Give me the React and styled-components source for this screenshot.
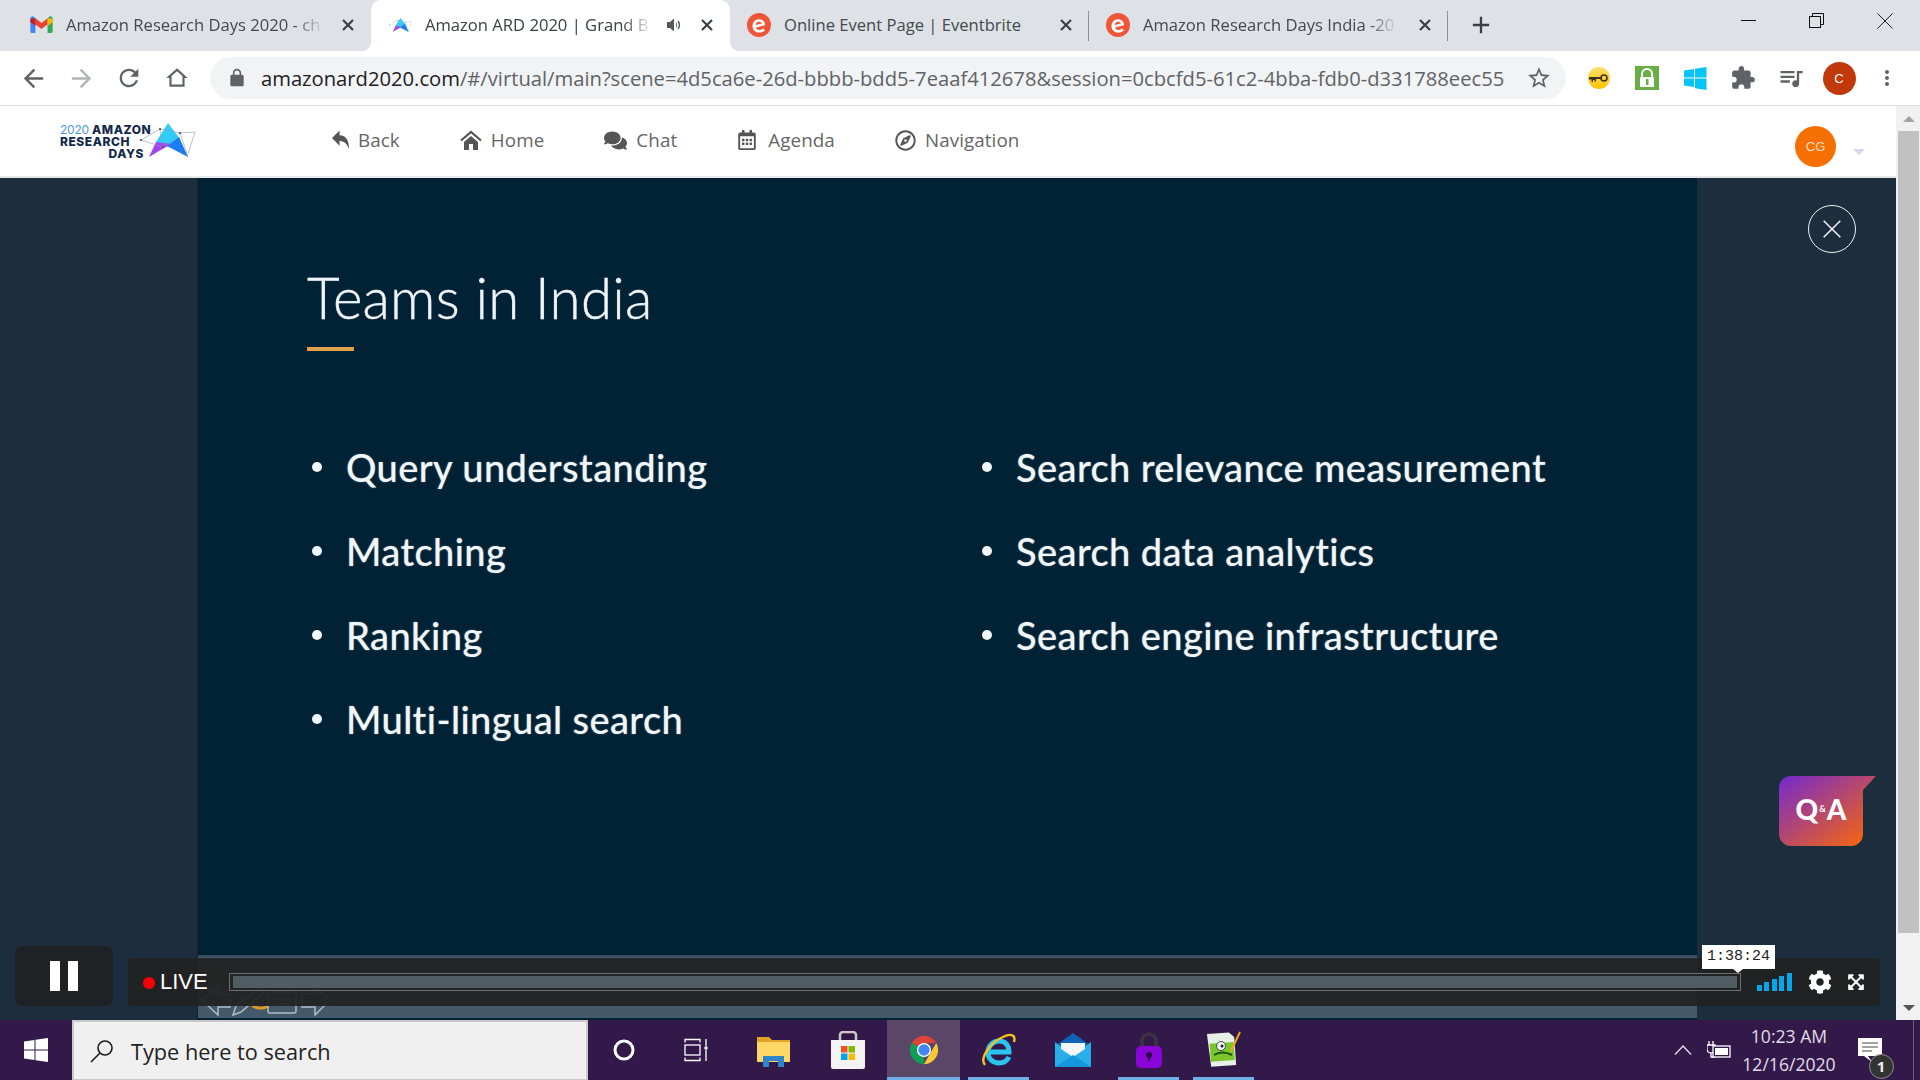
import React from "react";
import styled, { createGlobalStyle } from "styled-components";
import { FaCog, FaComments, FaExpandArrowsAlt, FaRegCompass, FaRegCalendarAlt } from "react-icons/fa";

const Global = createGlobalStyle`
  html, body { margin: 0; padding: 0; width: 1920px; height: 1080px; overflow: hidden; background: #1c2e3d; }
  * { box-sizing: border-box; }
  #root { width: 1920px; height: 1080px; }
`;

const Screen = styled.div`
  width: 1920px; height: 1080px; display: flex; flex-direction: column;
  font-family: "Open Sans", "Liberation Sans", sans-serif;
`;

/* ---------- tabs ---------- */
const TabStrip = styled.div`
  height: 51px; background: #dee1e6; display: flex; align-items: stretch; padding-left: 12px; flex: none;
`;
const Tab = styled.div`
  position: relative; width: 359px; display: flex; align-items: center; padding: 0 11px 2px 19px;
  background: ${p => (p.$active ? "#fff" : "transparent")};
  border-radius: ${p => (p.$active ? "10px 10px 0 0" : "0")};
  ${p => p.$active && `
    &::before, &::after { content: ""; position: absolute; bottom: 0; width: 10px; height: 10px; }
    &::before { left: -10px; background: radial-gradient(circle at 0 0, transparent 10px, #fff 10.5px); }
    &::after { right: -10px; background: radial-gradient(circle at 100% 0, transparent 10px, #fff 10.5px); }
  `}
`;
const TabSep = styled.span`
  position: absolute; right: 0; top: 11px; width: 1px; height: 30px; background: #8d9094;
`;
const TabIcon = styled.span`
  width: 20px; height: 20px; margin-right: 15px; flex: none; display: flex; align-items: center; justify-content: center;
  svg { flex: none; }
`;
const TabTitle = styled.span`
  flex: 0 1 auto; min-width: 0; white-space: nowrap; font-size: 16.6px; color: ${p => (p.$active ? "#3c4043" : "#45484c")};
  ${p => p.$fade && `
    -webkit-mask-image: linear-gradient(to right, #000 calc(100% - 26px), rgba(0,0,0,.12) 100%);
    mask-image: linear-gradient(to right, #000 calc(100% - 26px), rgba(0,0,0,.12) 100%);
  `}
`;
const TabGlyph = styled.span`
  width: 24px; height: 24px; flex: none; display: flex; align-items: center; justify-content: center; color: #3c4043;
  margin-left: ${p => (p.$push ? "auto" : "9px")};
`;
const NewTab = styled.div`
  width: 28px; margin-left: 19px; padding-bottom: 2px; display: flex; align-items: center; justify-content: center; color: #3c4043;
`;
const WindowButtons = styled.div`
  margin-left: auto; display: flex; padding-right: 1px;
`;
const WindowButton = styled.div`
  width: 68px; display: flex; justify-content: center; padding-top: 13px;
`;

/* ---------- toolbar ---------- */
const Toolbar = styled.div`
  height: 55px; background: #fff; border-bottom: 1px solid #dadce0; display: flex; align-items: center; padding: 0 9px; flex: none;
`;
const ToolButton = styled.div`
  width: 48px; height: 42px; display: flex; align-items: center; justify-content: center; flex: none;
  color: ${p => (p.$off ? "#b3b5b8" : "#5f6368")};
`;
const Omnibox = styled.div`
  width: 1356px; height: 42px; border-radius: 21px; background: #f1f3f4; margin: 0 9px; display: flex; align-items: center; padding-left: 16px; flex: none;
`;
const LockBox = styled.span`
  width: 22px; display: flex; justify-content: center; color: #5f6368; flex: none; margin-right: 13px;
`;
const Url = styled.span`
  font-size: 20.2px; color: #5f6368; white-space: nowrap; width: 1243px; flex: none;
  b { font-weight: 400; color: #202124; }
`;
const StarBox = styled.span`
  margin-left: auto; width: 54px; display: flex; justify-content: center; color: #5f6368;
`;
const Profile = styled.div`
  width: 33px; height: 33px; border-radius: 50%; background: #c1390b; color: #fff; display: flex; align-items: center; justify-content: center;
  font: 13px "Liberation Sans", sans-serif;
`;

/* ---------- page ---------- */
const Page = styled.div`
  flex: 1; min-height: 0; display: flex;
`;
const Main = styled.div`
  flex: 1; min-width: 0; display: flex; flex-direction: column;
`;
const Scrollbar = styled.div`
  width: 24px; background: #f1f1f1; display: flex; flex-direction: column; align-items: center; padding: 0 1px 0 2px;
`;
const ScrollArrow = styled.div`
  height: 25px; display: flex; align-items: center; justify-content: center; flex: none;
  &::before { content: ""; border-left: 6px solid transparent; border-right: 6px solid transparent;
    ${p => (p.$down ? "border-top: 6px solid #555;" : "border-bottom: 6px solid #a3a3a3;")} }
`;
const ScrollThumb = styled.div`
  width: 100%; height: 802px; background: #c1c1c1; flex: none;
`;
const ScrollFill = styled.div` flex: 1; `;

const Nav = styled.nav`
  height: 72px; background: #fff; border-bottom: 2px solid #e9e9e9; display: flex; align-items: center; padding: 0 31px 2px 60px; flex: none;
`;
const Logo = styled.div`
  width: 136px; height: 40px; display: flex; align-items: center; flex: none; margin-right: 136px;
`;
const LogoText = styled.div`
  width: 80px; font: 800 12px/12px Inter, "Liberation Sans", sans-serif; color: #13294b; letter-spacing: 0.55px; flex: none; white-space: nowrap; margin-top: 3px;
  span { font-weight: 400; color: #4f9ad6; letter-spacing: -0.2px; margin-right: 3px; }
`;
const LogoLine = styled.div`
  width: 86px; text-align: ${p => (p.$right ? "right" : "left")}; padding-right: ${p => (p.$right ? 2 : 0)}px;
`;
const NavLinks = styled.div`
  display: flex; gap: 60px; align-items: center;
`;
const NavLink = styled.div`
  display: flex; align-items: center; gap: ${p => p.$gap || 9}px; color: #666; font-size: 18.8px; font-family: "Open Sans", sans-serif; letter-spacing: 0.1px;
  svg { color: #555; flex: none; }
`;
const UserBox = styled.div`
  margin-left: auto; margin-top: 13px; display: flex; align-items: center; gap: 17px;
`;
const UserAvatar = styled.div`
  width: 41px; height: 41px; border-radius: 50%; background: #f56f02; color: #ffe0c4; font: 13px "Liberation Sans", sans-serif; display: flex; align-items: center; justify-content: center;
`;
const Caret = styled.div`
  margin-top: 10px; border-left: 6px solid transparent; border-right: 6px solid transparent; border-top: 6px solid #d3d8e6;
`;

/* ---------- stage ---------- */
const Stage = styled.div`
  position: relative; flex: 1; min-height: 0; background: #1c2e3d; padding-left: 198px; display: flex;
`;
const Slide = styled.div`
  width: 1499px; display: flex; flex-direction: column; background: #012235; padding-bottom: 2px; box-shadow: -1px 0 0 #152331;
`;
const SlideBody = styled.div`
  flex: 1; padding: 89px 0 0 109px; color: #f1f6f8; font-family: "Open Sans", sans-serif;
`;
const Title = styled.h1`
  margin: 0; font: 300 56.4px/60px Lato, "Open Sans", sans-serif; color: #eef4f7; letter-spacing: 0.25px; -webkit-text-stroke: 0.35px #eef4f7; text-shadow: 0 0 1px rgba(255,255,255,.4);
`;
const Rule = styled.div`
  width: 47px; height: 4px; margin-top: 20px; background: #dfa24a;
`;
const Bullets = styled.ul`
  list-style: none; margin: 74px 0 0 5px; padding: 0; display: grid; grid-template-columns: 670px 1fr; grid-auto-flow: column; grid-template-rows: repeat(4, 84.1px);
`;
const Bullet = styled.li`
  display: flex; align-items: center; gap: 24px; font: 500 38px/1 Lato, sans-serif; color: #f1f6f8; white-space: nowrap; letter-spacing: 0.4px;
  text-shadow: 0 0 1.5px rgba(255,255,255,.45);
  &::before { content: ""; width: 10px; height: 10px; border-radius: 50%; background: #f1f6f8; flex: none; }
`;
const GhostStrip = styled.div`
  height: 63px; background: #44596a; border-top: 2px solid #35495a; display: flex; align-items: flex-end; flex: none; padding-left: 2px;
`;

/* overlays */
const CloseButton = styled.div`
  position: absolute; left: 1808px; top: 27px; width: 48px; height: 48px; border-radius: 50%; border: 1.5px solid #eef1f3; display: flex; align-items: center; justify-content: center;
`;
const QaBadge = styled.div`
  position: absolute; left: 1779px; top: 598px; width: 97px; height: 70px;
  svg { display: block; }
`;
const QaLabel = styled.div`
  position: absolute; left: 16px; top: 17px; width: 52px; display: flex; align-items: center; justify-content: center; color: #fff; font: 900 28px/32px Lato, "Liberation Sans", sans-serif;
  small { font-size: 9px; font-weight: 700; margin: 0 1px; }
`;
const PauseBox = styled.div`
  position: absolute; left: 15px; top: 768px; width: 98px; height: 60px; background: #1f2224; border-radius: 8px; display: flex; align-items: center; justify-content: center; gap: 8px;
`;
const PauseBar = styled.span`
  width: 10px; height: 30px; background: #fff;
`;
const ControlBar = styled.div`
  position: absolute; left: 128px; top: 780px; width: 1752px; height: 48px; background: rgba(32,33,34,.93); border-radius: 4px; display: flex; align-items: center; padding: 0 15px;
`;
const LiveDot = styled.span`
  width: 12px; height: 12px; border-radius: 50%; background: #fb0007; flex: none; margin-top: 2px;
`;
const LiveText = styled.span`
  font: 22px "Liberation Sans", sans-serif; color: #fff; margin-left: 5px;
`;
const Timeline = styled.div`
  width: 1512px; height: 18px; margin-left: 21px; border: 1px solid #6b6f70; padding: 2px 3px; flex: none;
`;
const TimelineFill = styled.div`
  height: 100%; background: #4f5c61;
`;
const Signal = styled.div`
  display: flex; align-items: flex-end; gap: 2.6px; height: 18px; margin-left: 16px; flex: none;
`;
const SignalBar = styled.span`
  width: 5px; height: ${p => p.$h}px; background: #06a7e8;
`;
const CtrlIcon = styled.span`
  display: flex; color: #fff; margin-left: ${p => p.$ml}px; flex: none;
`;
const Tooltip = styled.div`
  position: absolute; left: 1702px; top: 767px; width: 73px; height: 24px; background: #fff; color: #222; font: 15px/24px "Liberation Mono", monospace; text-align: center;
  &::after { content: ""; position: absolute; left: 31px; bottom: -4px; border-left: 5px solid transparent; border-right: 5px solid transparent; border-top: 4px solid #fff; }
`;

/* ---------- taskbar ---------- */
const Taskbar = styled.div`
  height: 60px; background: #33194a; display: flex; align-items: stretch; flex: none; color: #e4deea;
`;
const StartBox = styled.div`
  width: 72px; display: flex; align-items: center; justify-content: center; flex: none;
`;
const SearchBox = styled.div`
  width: 516px; background: #f0f0f0; border: 2px solid #c9c9c9; border-bottom-width: 1px; display: flex; align-items: center; padding: 1px 0 0 16px; gap: 17px; flex: none;
  color: #222; font-size: 21.7px;
`;
const TaskSlot = styled.div`
  width: ${p => p.$w}px; margin-left: ${p => p.$ml || 0}px; flex: none; display: flex; align-items: center; justify-content: center; position: relative;
  background: ${p => (p.$on ? "#5c4668" : "transparent")};
  ${p => p.$open && `&::after { content: ""; position: absolute; left: 0; right: 0; bottom: 0; height: 3px; background: #6fb0e8; }`}
`;
const Tray = styled.div`
  margin-left: auto; margin-right: 6px; display: flex; align-items: center; border-right: 1px solid #6d5a7e; position: relative;
`;
const TrayIcon = styled.div`
  display: flex; margin-right: ${p => p.$mr}px; flex: none;
`;
const Clock = styled.div`
  width: 105px; text-align: center; font-size: 17.6px; line-height: 28px; color: #e2dce8; flex: none; margin-right: 12.5px;
`;
const Notify = styled.div`
  position: relative; width: 59px; height: 60px; display: flex; padding: 18px 0 0 4px; flex: none;
`;
const NotifyBadge = styled.span`
  position: absolute; left: 14.5px; top: 33.5px; width: 25px; height: 25px; border-radius: 50%; background: #333; border: 1.5px solid #8d8d8d; color: #eee; font: 700 15px/22px "Open Sans", sans-serif; text-align: center;
`;

/* ---------- icons ---------- */
const M = ({ d, size = 24 }) => (
  <svg width={size} height={size} viewBox="0 0 24 24" fill="currentColor" aria-hidden="true">
    <path d={d} />
  </svg>
);
const X = ({ size = 12, w = 2.2, color = "currentColor" }) => (
  <svg width={size} height={size} viewBox="0 0 12 12" stroke={color} strokeWidth={w} fill="none"><path d="M1 1l10 10M11 1L1 11" /></svg>
);
const BackIcon = () => (
  <svg width="17" height="20" viewBox="0 0 18 20" fill="currentColor"><path d="M0 8L8 0v5c6 0 10 4 10 15-2-7-6-9-10-9v5z" /></svg>
);
const HomeIcon = () => (
  <svg width="22" height="20" viewBox="0 0 22 20" fill="currentColor">
    <path d="M1 10.500L11 2l10 8.500" fill="none" stroke="currentColor" strokeWidth="2.200" />
    <path d="M4 12l7-6 7 6v8h-5v-6H9v6H4z" />
  </svg>
);
const Gmail = () => (
  <svg width="23" height="17" viewBox="0 0 21 16">
    <path d="M0 2.500C0 .8 1.800-.4 3.200.7L4.800 2v14H1.500A1.500 1.500 0 0 1 0 14.500z" fill="#4285f4" />
    <path d="M16.200 2l1.600-1.300C19.200-.4 21 .8 21 2.500v12a1.500 1.500 0 0 1-1.500 1.500h-3.300z" fill="#34a853" />
    <path d="M4.800 2l5.700 4.500L16.200 2v6l-5.700 4.300L4.800 8z" fill="#ea4335" />
    <path d="M0 2.500v3.200l4.800 3.600V2z" fill="#c5221f" />
    <path d="M21 2.500v3.200l-4.800 3.600V2z" fill="#fbbc04" />
  </svg>
);
const ArdMark = ({ w = 56, h = 38 }) => (
  <svg width={w} height={h} viewBox="0 0 56 38">
    <polygon points="28,2 40,18 27,26 16,21" fill="#2fcdfa" />
    <polygon points="39,16 48,36 27,25" fill="#1b7df0" />
    <polygon points="16,21 31,23 9,36" fill="#a445f2" />
    <g stroke="#8f97a3" strokeWidth="0.6" fill="none">
      <path d="M1 19L20 8 40 12 55 11 48 33M1 19L23 26 20 8M23 26L40 12 48 36" />
    </g>
    <circle cx="20" cy="8" r="1" fill="#444" /><circle cx="40" cy="12" r="1" fill="#444" />
    <circle cx="23" cy="26" r="1" fill="#444" /><circle cx="1" cy="19" r="1" fill="#444" />
  </svg>
);
const Ebrite = () => (
  <svg width="24" height="24" viewBox="0 0 21 21">
    <circle cx="10.500" cy="10.500" r="10.500" fill="#f05537" />
    <path d="M4.800 11.500c0-3.600 2.500-6 5.700-6 3 0 5.300 2 5.300 5.200l-8 1.900c.6 1.500 1.800 2.200 3.200 2.200 1.200 0 2.200-.5 3-1.300l1.700 1.500c-1.200 1.400-3 2.100-4.800 2.100-3.600 0-6.100-2.300-6.100-5.600zM7.600 10.400l5.500-1.300c-.4-1-1.400-1.500-2.600-1.500-1.600 0-2.800 1.100-2.900 2.800z" fill="#fff" />
  </svg>
);
const Speaker = () => (
  <svg width="15" height="14" viewBox="0 0 15 14" fill="#55585c"><path d="M0 4h3l4-3.500v13L3 10H0z" /><path d="M9 4c1.300 1.500 1.300 4.500 0 6zM11.500 2.500c2.200 2.500 2.200 6.500 0 9l-1-.9c1.600-2 1.600-5.200 0-7.200z" /></svg>
);
const KeyExt = () => (
  <svg width="24" height="24" viewBox="0 0 24 24">
    <defs><linearGradient id="kg" x1="0" y1="0" x2="0" y2="1"><stop offset="0" stopColor="#ffdf6a" /><stop offset="1" stopColor="#ffc400" /></linearGradient></defs>
    <circle cx="12" cy="12" r="11" fill="url(#kg)" />
    <circle cx="17" cy="12" r="3" fill="none" stroke="#3a3320" strokeWidth="1.6" />
    <path d="M2 11h12.500v2H9v2.500H7.500V14H6v2H4.500v-2.500H2z" fill="#3a3320" />
  </svg>
);
const LockExt = () => (
  <svg width="24" height="24" viewBox="0 0 24 24">
    <rect width="24" height="24" fill="#69ae47" />
    <path d="M7 11V8a5 5 0 0 1 10 0v3" fill="none" stroke="#fff" strokeWidth="2" />
    <rect x="5" y="11" width="14" height="10" fill="#fff" />
    <rect x="11" y="13" width="2.500" height="6" fill="#69ae47" />
  </svg>
);
const WinExt = () => (
  <svg width="23" height="23" viewBox="0 0 23 23" fill="#05c4f7"><path d="M0 3.500L10 2v8.500H0zM11 1.800L22.500 0v10.500H11zM0 11.500h10V20L0 18.500zM11 11.500h11.500V23L11 21.200z" /></svg>
);
const WinStart = () => (
  <svg width="24" height="24" viewBox="0 0 24 24" fill="#fff"><path d="M0 3.400L10.500 2v9.500H0zM11.500 1.800L24 0v11.500H11.500zM0 12.500h10.500V22L0 20.600zM11.500 12.500H24V24l-12.500-1.800z" /></svg>
);
const Magnifier = () => (
  <svg width="24" height="24" viewBox="0 0 24 24" fill="none" stroke="#1a1a1a" strokeWidth="1.600"><circle cx="15" cy="9" r="7" /><path d="M10 14L1 23" /></svg>
);
const Cortana = () => (
  <svg width="24" height="24" viewBox="0 0 24 24" fill="none" stroke="#fff" strokeWidth="3"><circle cx="12" cy="12" r="9" /></svg>
);
const TaskView = () => (
  <svg width="24" height="24" viewBox="0 0 24 24" fill="none" stroke="#fff" strokeWidth="1.300">
    <path d="M1 4.500V1.500h15v3M1 19.500v3h15v-3" /><rect x="1" y="7" width="15" height="10" /><path d="M22 1v7M22 12v11" /><rect x="20.500" y="8.500" width="3" height="3" fill="#fff" stroke="none" />
  </svg>
);
const Explorer = () => (
  <svg width="33" height="33" viewBox="0 0 33 33">
    <path d="M0 3h12l3 3h18v22H0z" fill="#e0a526" />
    <path d="M0 8h33v19a1 1 0 0 1-1 1H1a1 1 0 0 1-1-1z" fill="#ffd766" />
    <path d="M6 22h21v11h-6v-6h-9v6H6z" fill="#2f85c8" />
  </svg>
);
const Store = () => (
  <svg width="36" height="38" viewBox="0 0 36 38">
    <path d="M10 10V4a3 3 0 0 1 3-3h10a3 3 0 0 1 3 3v6" fill="none" stroke="#c9c9c9" strokeWidth="2.500" />
    <path d="M1 9h34v27a2 2 0 0 1-2 2H3a2 2 0 0 1-2-2z" fill="#f3f3f3" />
    <rect x="11" y="15" width="6.500" height="6.500" fill="#f25022" /><rect x="18.500" y="15" width="6.500" height="6.500" fill="#7fba00" />
    <rect x="11" y="22.500" width="6.500" height="6.500" fill="#00a4ef" /><rect x="18.500" y="22.500" width="6.500" height="6.500" fill="#ffb900" />
  </svg>
);
const Chrome = () => (
  <svg width="34" height="34" viewBox="0 0 48 48">
    <path d="M24 24L6.700 14A20 20 0 0 1 41.300 14H24z" fill="#db4437" />
    <path d="M24 44A20 20 0 0 1 6.700 14L24 24z" fill="#0f9d58" />
    <path d="M41.300 14A20 20 0 0 1 24 44l8.700-15z" fill="#fcc934" />
    <circle cx="24" cy="24" r="10" fill="#fff" /><circle cx="24" cy="24" r="8" fill="#4285f4" />
  </svg>
);
const Ie = () => (
  <svg width="36" height="36" viewBox="0 0 36 36" fill="none">
    <path d="M8 20h20c0-7-4-11-10-11S7 14 7 20.500c0 6.500 5 10.500 11 10.500 4 0 8-2 10-6" stroke="#2cc3ef" strokeWidth="5" />
    <path d="M4 33C-2 26 10 10 22 5c8-4 13-2 11 5" stroke="#f4c21c" strokeWidth="2.400" />
  </svg>
);
const Mail = () => (
  <svg width="36" height="34" viewBox="0 0 36 34">
    <path d="M18 0l18 13v21H0V13z" fill="#0e63b5" />
    <path d="M18 22L0 9v25h36V9z" fill="#28aee8" />
    <path d="M6 10h24v6l-12 8-12-8z" fill="#f4f7fa" />
    <path d="M0 34l18-12 18 12z" fill="#1596de" />
  </svg>
);
const PurpleLock = () => (
  <svg width="26" height="36" viewBox="0 0 26 36">
    <path d="M6 15V9a7 7 0 0 1 14 0v6" fill="none" stroke="#3b3344" strokeWidth="3.500" />
    <rect y="14" width="26" height="22" rx="5" fill="#8a04d8" />
    <circle cx="13" cy="23" r="3" fill="#2c0746" /><rect x="12" y="23" width="2" height="6" fill="#2c0746" />
  </svg>
);
const NotepadPP = () => (
  <svg width="34" height="38" viewBox="0 0 34 38">
    <path d="M1 2h22l5 5v28H3z" fill="#e8efe7" transform="rotate(-4 14 18)" />
    <rect x="3" y="12" width="24" height="18" fill="#7cc52b" transform="rotate(-4 14 18)" />
    <circle cx="14" cy="15" r="4.500" fill="#f4f4f4" stroke="#355" /><circle cx="15" cy="15" r="1.500" fill="#222" />
    <path d="M7 24c5-3 12-3 18 0" stroke="#1d4f16" strokeWidth="2" fill="none" />
    <path d="M24 20L33 1" stroke="#f0a51d" strokeWidth="2" />
  </svg>
);
const Power = () => (
  <svg width="24" height="18" viewBox="0 0 24 18" fill="none" stroke="#fff" strokeWidth="1.300">
    <path d="M2 0v4M6 0v4M0 4h8v4a4 4 0 0 1-8 0zM4 12v4h4" />
    <rect x="6" y="5" width="17" height="11" fill="#33194a" /><rect x="8" y="7" width="13" height="7" fill="#fff" stroke="none" />
  </svg>
);
const Chevron = () => (
  <svg width="18" height="10" viewBox="0 0 18 10" fill="none" stroke="#e4deea" strokeWidth="1.300"><path d="M1 9.500L9 1l8 8.500" /></svg>
);
const Bubble = () => (
  <svg width="24" height="24" viewBox="0 0 24 24"><path d="M0 0h24v18H10l4 6-8-6H0z" fill="#fff" /><path d="M4 5h16M4 9h16M4 13h10" stroke="#444" strokeWidth="1.100" /></svg>
);
const Ghosts = () => (
  <svg width="132" height="33" viewBox="0 0 132 33" fill="none" stroke="#aebcc6" strokeWidth="1.500">
    <path d="M2 15L18 2v7h12v13H18v8z" />
    <path d="M33 30l3-9L58 4l5 4-22 19z" />
    <path d="M52 20c4 4 12 4 16 1" stroke="#e39a22" strokeWidth="3" />
    <rect x="68" y="7" width="28" height="21" rx="2" />
    <path d="M74 14h16M74 19h16" />
    <path d="M102 9h13V2l15 13-15 15v-8h-13z" />
  </svg>
);

const tabs = [
  { icon: <Gmail />, title: "Amazon Research Days 2020 - ch", fade: true },
  { icon: <ArdMark w={23} h={16} />, title: "Amazon ARD 2020 | Grand B", active: true, audio: true, fade: true },
  { icon: <Ebrite />, title: "Online Event Page | Eventbrite", sep: true },
  { icon: <Ebrite />, title: "Amazon Research Days India -20", sep: true, fade: true },
];
const left = ["Query understanding", "Matching", "Ranking", "Multi-lingual search"];
const right = ["Search relevance measurement", "Search data analytics", "Search engine infrastructure"];

export default function App() {
  return (
    <Screen>
      <Global />
      <TabStrip>
        {tabs.map(t => (
          <Tab key={t.title} $active={t.active}>
            <TabIcon>{t.icon}</TabIcon>
            <TabTitle $active={t.active} $fade={t.fade}>{t.title}</TabTitle>
            {t.audio && <TabGlyph $push><Speaker /></TabGlyph>}
            <TabGlyph $push={!t.audio}><X /></TabGlyph>
            {t.sep && <TabSep />}
          </Tab>
        ))}
        <NewTab><M size={28} d="M19 13h-6v6h-2v-6H5v-2h6V5h2v6h6v2z" /></NewTab>
        <WindowButtons>
          <WindowButton><svg width="16" height="14" viewBox="0 0 16 14" stroke="#111" fill="none"><path d="M0 7.500h15" /></svg></WindowButton>
          <WindowButton><svg width="16" height="16" viewBox="0 0 16 16" stroke="#111" fill="none"><rect x=".5" y="3.500" width="11" height="11" /><path d="M3.500 3.500V.5h11v11h-3" /></svg></WindowButton>
          <WindowButton><svg width="16" height="16" viewBox="0 0 16 16" stroke="#222" fill="none"><path d="M.5.5l15 15M15.500.5l-15 15" /></svg></WindowButton>
        </WindowButtons>
      </TabStrip>
      <Toolbar>
        <ToolButton><M size={29} d="M20 11H7.830l5.590-5.590L12 4l-8 8 8 8 1.410-1.410L7.830 13H20v-2z" /></ToolButton>
        <ToolButton $off><M size={29} d="M4 11h12.170l-5.590-5.590L12 4l8 8-8 8-1.410-1.410L16.170 13H4v-2z" /></ToolButton>
        <ToolButton><M size={28} d="M17.650 6.350C16.200 4.900 14.210 4 12 4c-4.420 0-7.990 3.580-7.990 8s3.570 8 7.990 8c3.730 0 6.840-2.550 7.730-6h-2.080c-.82 2.330-3.040 4-5.650 4-3.310 0-6-2.690-6-6s2.690-6 6-6c1.660 0 3.140.69 4.220 1.780L13 11h7V4l-2.350 2.350z" /></ToolButton>
        <ToolButton><M size={26} d="M12 5.690l5 4.500V18h-10v-7.810l5-4.500M12 3L2 12h3v8h14v-8h3L12 3z" /></ToolButton>
        <Omnibox>
          <LockBox><M size={20} d="M18 8h-1V6c0-2.760-2.240-5-5-5S7 3.240 7 6v2H6c-1.100 0-2 .9-2 2v10c0 1.100.9 2 2 2h12c1.100 0 2-.9 2-2V10c0-1.100-.9-2-2-2zm-2.900 0H8.900V6c0-1.710 1.390-3.100 3.100-3.100 1.710 0 3.100 1.390 3.100 3.100v2z" /></LockBox>
          <Url><b>amazonard2020.com</b>/#/virtual/main?scene=4d5ca6e-26d-bbbb-bdd5-7eaaf412678&amp;session=0cbcfd5-61c2-4bba-fdb0-d331788eec55</Url>
          <StarBox><M size={26} d="M22 9.240l-7.190-.62L12 2 9.190 8.630 2 9.240l5.460 4.730L5.820 21 12 17.270 18.180 21l-1.630-7.030L22 9.240zM12 15.400l-3.760 2.270 1-4.280-3.320-2.880 4.380-.38L12 6.100l1.710 4.040 4.380.38-3.320 2.880 1 4.280L12 15.400z" /></StarBox>
        </Omnibox>
        <ToolButton><KeyExt /></ToolButton>
        <ToolButton><LockExt /></ToolButton>
        <ToolButton><WinExt /></ToolButton>
        <ToolButton><M size={26} d="M20.500 11H19V7c0-1.100-.9-2-2-2h-4V3.500C13 2.120 11.880 1 10.500 1S8 2.120 8 3.500V5H4c-1.100 0-1.990.9-1.990 2v3.800H3.500c1.490 0 2.700 1.210 2.700 2.700s-1.210 2.700-2.700 2.700H2V20c0 1.100.9 2 2 2h3.800v-1.500c0-1.490 1.210-2.700 2.700-2.700 1.490 0 2.700 1.210 2.700 2.700V22H17c1.100 0 2-.9 2-2v-4h1.500c1.380 0 2.500-1.120 2.500-2.500S21.880 11 20.500 11z" /></ToolButton>
        <ToolButton><M size={28} d="M15 6H3v2h12V6zm0 4H3v2h12v-2zM3 16h8v-2H3v2zM17 6v8.180c-.31-.11-.65-.18-1-.18-1.660 0-3 1.340-3 3s1.340 3 3 3 3-1.340 3-3V8h3V6h-5z" /></ToolButton>
        <ToolButton><Profile>C</Profile></ToolButton>
        <ToolButton><M d="M12 8c1.100 0 2-.9 2-2s-.9-2-2-2-2 .9-2 2 .9 2 2 2zm0 2c-1.100 0-2 .9-2 2s.9 2 2 2 2-.9 2-2-.9-2-2-2zm0 6c-1.100 0-2 .9-2 2s.9 2 2 2 2-.9 2-2-.9-2-2-2z" /></ToolButton>
      </Toolbar>
      <Page>
        <Main>
          <Nav>
            <Logo>
              <LogoText>
                <LogoLine><span>2020</span>AMAZON</LogoLine>
                <LogoLine>RESEARCH</LogoLine>
                <LogoLine $right>DAYS</LogoLine>
              </LogoText>
              <ArdMark />
            </Logo>
            <NavLinks>
              <NavLink><BackIcon /><span>Back</span></NavLink>
              <NavLink><HomeIcon /><span>Home</span></NavLink>
              <NavLink><FaComments size={23} /><span>Chat</span></NavLink>
              <NavLink $gap={11}><FaRegCalendarAlt size={20} /><span>Agenda</span></NavLink>
              <NavLink><FaRegCompass size={21} /><span>Navigation</span></NavLink>
            </NavLinks>
            <UserBox>
              <UserAvatar>CG</UserAvatar>
              <Caret />
            </UserBox>
          </Nav>
          <Stage>
            <Slide>
              <SlideBody>
                <Title>Teams in India</Title>
                <Rule />
                <Bullets>
                  {left.map(t => <Bullet key={t}>{t}</Bullet>)}
                  {right.map(t => <Bullet key={t}>{t}</Bullet>)}
                </Bullets>
              </SlideBody>
              <GhostStrip><Ghosts /></GhostStrip>
            </Slide>
            <CloseButton><X size={20} w={0.9} color="#f2f4f6" /></CloseButton>
            <QaBadge>
              <svg width="97" height="70" viewBox="0 0 97 70">
                <defs><linearGradient id="qa" x1="0" y1="0" x2="1" y2="1"><stop offset="0" stopColor="#7429d0" /><stop offset="1" stopColor="#ff6a00" /></linearGradient></defs>
                <path d="M12 0H97L84 14V58a12 12 0 0 1-12 12H12A12 12 0 0 1 0 58V12A12 12 0 0 1 12 0z" fill="url(#qa)" />
              </svg>
              <QaLabel>Q<small>&amp;</small>A</QaLabel>
            </QaBadge>
            <PauseBox><PauseBar /><PauseBar /></PauseBox>
            <ControlBar>
              <LiveDot />
              <LiveText>LIVE</LiveText>
              <Timeline><TimelineFill /></Timeline>
              <Signal>{[6, 9, 12, 15, 18].map(h => <SignalBar key={h} $h={h} />)}</Signal>
              <CtrlIcon $ml={16}><FaCog size={24} /></CtrlIcon>
              <CtrlIcon $ml={15}><FaExpandArrowsAlt size={18} /></CtrlIcon>
            </ControlBar>
            <Tooltip>1:38:24</Tooltip>
          </Stage>
        </Main>
        <Scrollbar>
          <ScrollArrow />
          <ScrollThumb />
          <ScrollFill />
          <ScrollArrow $down />
        </Scrollbar>
      </Page>
      <Taskbar>
        <StartBox><WinStart /></StartBox>
        <SearchBox><Magnifier />Type here to search</SearchBox>
        <TaskSlot $w={71}><Cortana /></TaskSlot>
        <TaskSlot $w={74}><TaskView /></TaskSlot>
        <TaskSlot $w={80}><Explorer /></TaskSlot>
        <TaskSlot $w={69}><Store /></TaskSlot>
        <TaskSlot $w={73} $ml={5} $on $open><Chrome /></TaskSlot>
        <TaskSlot $w={61} $ml={8} $open><Ie /></TaskSlot>
        <TaskSlot $w={88}><Mail /></TaskSlot>
        <TaskSlot $w={61} $ml={1} $open><PurpleLock /></TaskSlot>
        <TaskSlot $w={61} $ml={14} $open><NotepadPP /></TaskSlot>
        <Tray>
          <TrayIcon $mr={15}><Chevron /></TrayIcon>
          <TrayIcon $mr={6}><Power /></TrayIcon>
          <Clock>10:23 AM<br />12/16/2020</Clock>
          <Notify><Bubble /><NotifyBadge>1</NotifyBadge></Notify>
        </Tray>
      </Taskbar>
    </Screen>
  );
}
